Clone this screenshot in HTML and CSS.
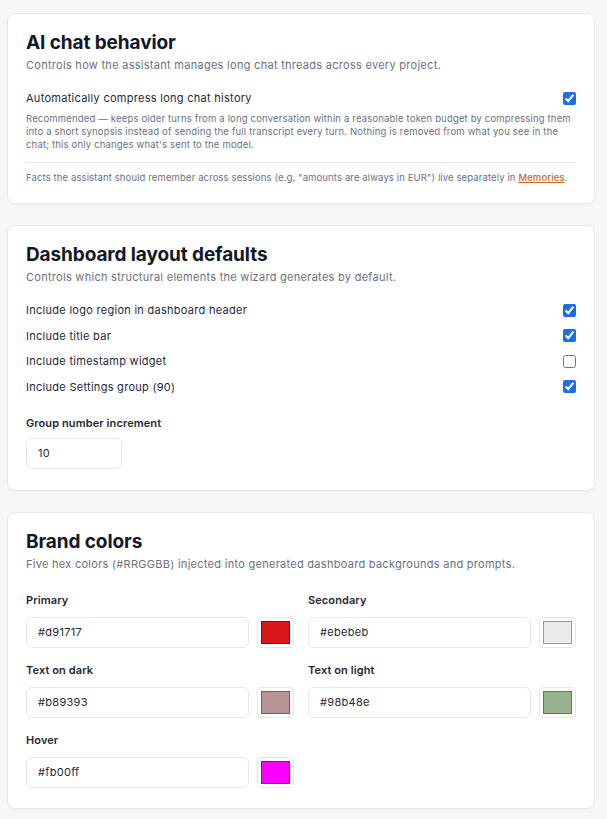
FILE: index.html
```html
<!DOCTYPE html>
<html lang="en">
<head>
    <meta charset="UTF-8">
    <meta name="viewport" content="width=device-width, initial-scale=1.0">
    <title>Settings</title>
    <link rel="stylesheet" href="styles.css">
</head>
<body>
    <div class="settings">
        <section class="card card-chat">
            <h2>AI chat behavior</h2>
            <p class="card-desc">Controls how the assistant manages long chat threads across every project.</p>

            <label class="toggle-row">
                <span>Automatically compress long chat history</span>
                <input type="checkbox" checked>
            </label>
            <p class="hint">Recommended — keeps older turns from a long conversation within a reasonable token budget by compressing them into a short synopsis instead of sending the full transcript every turn. Nothing is removed from what you see in the chat; this only changes what's sent to the model.</p>

            <p class="footnote">Facts the assistant should remember across sessions (e.g. "amounts are always in EUR") live separately in <a href="#">Memories</a>.</p>
        </section>

        <section class="card card-layout">
            <h2>Dashboard layout defaults</h2>
            <p class="card-desc">Controls which structural elements the wizard generates by default.</p>

            <div class="toggle-list">
                <label class="toggle-row">
                    <span>Include logo region in dashboard header</span>
                    <input type="checkbox" checked>
                </label>
                <label class="toggle-row">
                    <span>Include title bar</span>
                    <input type="checkbox" checked>
                </label>
                <label class="toggle-row">
                    <span>Include timestamp widget</span>
                    <input type="checkbox">
                </label>
                <label class="toggle-row">
                    <span>Include Settings group (90)</span>
                    <input type="checkbox" checked>
                </label>
            </div>

            <div class="field field-small">
                <label class="field-label">Group number increment</label>
                <input type="text" class="text-input" value="10">
            </div>
        </section>

        <section class="card">
            <h2>Brand colors</h2>
            <p class="card-desc">Five hex colors (#RRGGBB) injected into generated dashboard backgrounds and prompts.</p>

            <div class="color-grid">
                <div class="field">
                    <label class="field-label">Primary</label>
                    <div class="color-row">
                        <input type="text" class="text-input" value="#d91717">
                        <span class="swatch"><span class="swatch-fill" style="background: #d91717"></span></span>
                    </div>
                </div>
                <div class="field">
                    <label class="field-label">Secondary</label>
                    <div class="color-row">
                        <input type="text" class="text-input" value="#ebebeb">
                        <span class="swatch"><span class="swatch-fill" style="background: #ebebeb"></span></span>
                    </div>
                </div>
                <div class="field">
                    <label class="field-label">Text on dark</label>
                    <div class="color-row">
                        <input type="text" class="text-input" value="#b89393">
                        <span class="swatch"><span class="swatch-fill" style="background: #b89393"></span></span>
                    </div>
                </div>
                <div class="field">
                    <label class="field-label">Text on light</label>
                    <div class="color-row">
                        <input type="text" class="text-input" value="#98b48e">
                        <span class="swatch"><span class="swatch-fill" style="background: #98b48e"></span></span>
                    </div>
                </div>
                <div class="field">
                    <label class="field-label">Hover</label>
                    <div class="color-row">
                        <input type="text" class="text-input" value="#fb00ff">
                        <span class="swatch"><span class="swatch-fill" style="background: #fb00ff"></span></span>
                    </div>
                </div>
            </div>
        </section>
    </div>
</body>
</html>
```

FILE: styles.css
```css
body {
    margin: 0;
    font-family: Inter, "Noto Sans", sans-serif;
    background-color: #f6f7f9;
    color: #1f2937;
}
.settings {
    display: flex;
    flex-direction: column;
    gap: 21px;
    padding: 13px 12px 12px 7px;
}
.card {
    background: white;
    border: 1px solid #e6e8eb;
    border-radius: 8px;
    box-shadow: 0 1px 2px rgba(0,0,0,0.04);
    padding: 17px 18px 20px 18px;
}
.card-chat {
    padding-bottom: 19px;
}
.card-layout {
    padding-bottom: 21px;
}
h2 {
    margin: 0;
    font-size: 19px;
    line-height: 24px;
    font-weight: 700;
    color: #111827;
    letter-spacing: -0.1px;
}
.card-desc {
    margin: 2px 0 0;
    font-size: 11px;
    line-height: 16px;
    color: #6b7280;
    letter-spacing: 0.28px;
}
.toggle-row {
    display: flex;
    justify-content: space-between;
    align-items: center;
    font-size: 11px;
    line-height: 16px;
    color: #1f2937;
    letter-spacing: 0.28px;
    margin-top: 17px;
}
.toggle-row input {
    margin: 0;
    width: 13px;
    height: 13px;
    accent-color: #1a6fe6;
}
.toggle-list {
    display: flex;
    flex-direction: column;
    gap: 9.5px;
    margin-top: 17px;
}
.toggle-list .toggle-row {
    margin-top: 0;
}
.hint {
    margin: 6px 0 0;
    font-size: 9.5px;
    line-height: 13px;
    color: #6b7280;
    letter-spacing: 0.17px;
}
.footnote {
    margin: 11px 0 0;
    padding-top: 8px;
    border-top: 1px solid #e5e7eb;
    font-size: 9.5px;
    line-height: 13px;
    color: #6b7280;
    letter-spacing: 0.12px;
}
.footnote a {
    color: #cf6a1d;
    font-weight: 500;
}
.field {
    display: flex;
    flex-direction: column;
}
.field-small {
    margin-top: 20px;
}
.field-small .field-label {
    margin-bottom: 7px;
}
.field-small .text-input {
    width: 96px;
}
.field-label {
    font-size: 11px;
    line-height: 16px;
    font-weight: 600;
    color: #1f2937;
    letter-spacing: 0.1px;
    margin-bottom: 9px;
}
.text-input {
    box-sizing: border-box;
    height: 31px;
    padding: 0 11px;
    border: 1px solid #e5e7eb;
    border-radius: 6px;
    font-family: inherit;
    font-size: 11px;
    letter-spacing: 0.3px;
    color: #1f2937;
    background: white;
    outline: none;
}
.color-grid {
    display: grid;
    grid-template-columns: 1fr 1fr;
    column-gap: 14px;
    row-gap: 14px;
    margin-top: 20px;
}
.color-row {
    display: flex;
    gap: 8px;
}
.color-row .text-input {
    flex: 1;
    min-width: 0;
}
.swatch {
    box-sizing: border-box;
    width: 37px;
    height: 31px;
    padding: 3px;
    border: 1px solid #e5e7eb;
    border-radius: 4px;
    background: white;
    display: flex;
}
.swatch-fill {
    flex: 1;
    border: 1px solid rgba(0,0,0,0.35);
}
```
